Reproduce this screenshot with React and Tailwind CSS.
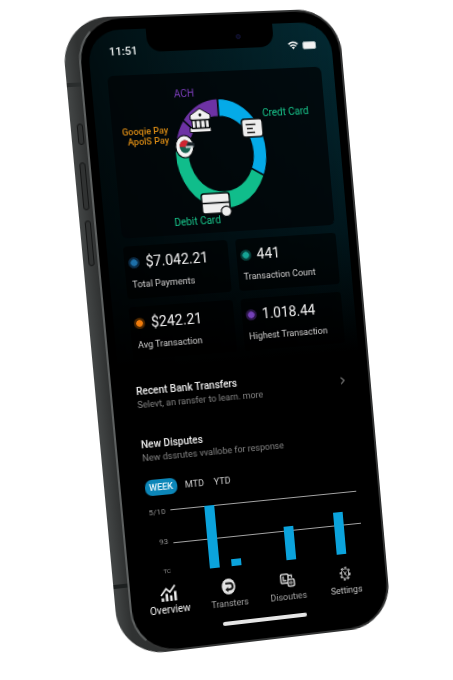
import { useState } from "react";
import { ChevronRight } from "lucide-react";

const segments = [
  { from: 1, to: 116, color: "#04aae8" },
  { from: 116, to: 284, color: "#10bd8b" },
  { from: 284, to: 310, color: "#6d32a4" },
  { from: 310, to: 361, color: "#6d32a4" },
];

const stats = [
  { value: "$7.042.21", label: "Total Payments", dot: "bg-[#1d6fa8] outline-[#0b2b45]" },
  { value: "441", label: "Transaction Count", dot: "bg-[#16a394] outline-[#07403c]" },
  { value: "$242.21", label: "Avg Transaction", dot: "bg-[#f07c0c] outline-[#4a2600]" },
  { value: "1.018.44", label: "Highest Transaction", dot: "bg-[#7440b8] outline-[#2b1748]" },
];

const bars = [
  { x: 34, height: 63 },
  { x: 56, height: 7 },
  { x: 112, height: 34 },
  { x: 164, height: 43 },
];

const periods = ["WEEK", "MTD", "YTD"];

function point(angle, rx, ry) {
  const t = (angle * Math.PI) / 180;
  return `${(106 + rx * Math.sin(t)).toFixed(2)} ${(82 - ry * Math.cos(t)).toFixed(2)}`;
}

function ringPath({ from, to }) {
  const large = to - from > 180 ? 1 : 0;
  return `M${point(from, 46, 55)} A46 55 0 ${large} 1 ${point(to, 46, 55)} L${point(to, 32, 37)} A32 37 0 ${large} 0 ${point(from, 32, 37)}Z`;
}

function PaymentRing() {
  return (
    <svg className="block" width="215" height="160" viewBox="0 0 215 160" aria-hidden="true">
      {segments.map((s) => (
        <path key={s.from} d={ringPath(s)} fill={s.color} stroke="#02080b" strokeWidth="1.5" />
      ))}
      {/* bank */}
      <g stroke="#05080a" strokeWidth="1">
        <path d="M78 47V42.500L88 36 98 42.500V47H96.500V55H98V59.500H77V55H79.500V47Z" fill="#f1f1f1" />
        <path d="M78.500 47.500H97.500M79 55.500H97M83.200 48V55M87.900 48V55M92.600 48V55" strokeWidth="1.400" />
        <circle cx="88" cy="42.500" r="1.400" fill="#05080a" stroke="none" />
      </g>
      {/* card */}
      <rect x="129" y="49" width="21" height="18" rx="3" fill="#ededed" stroke="#05080a" strokeWidth="1.5" />
      <path d="M133 54.500H143M134 58.500H140M134 62.500H142" stroke="#222" strokeWidth="1.300" fill="none" />
      {/* wallet */}
      <ellipse cx="70" cy="73" rx="9" ry="11" fill="#f4f4f4" stroke="#05080a" strokeWidth="1.200" />
      <ellipse cx="70.500" cy="73" rx="5.500" ry="6.500" fill="#17614f" />
      <path d="M65 73A5.500 6.500 0 0 1 74 68L71 73.500Z" fill="#cf2531" />
      <path d="M71 73 74.500 68.500 80 70V74Z" fill="#1c262b" />
      <path d="M71 73.500H78.500" stroke="#c9d2d4" strokeWidth="1.800" />
      {/* debit card */}
      <rect x="82" y="121" width="28" height="20" rx="2.500" fill="#efefef" stroke="#05080a" strokeWidth="1.500" />
      <path d="M82 130.500H110" stroke="#05080a" strokeWidth="1.600" />
      <circle cx="106" cy="139.500" r="5.200" fill="#efefef" stroke="#05080a" strokeWidth="1.200" />
    </svg>
  );
}

function OverviewIcon() {
  return (
    <svg width="18" height="18" viewBox="0 0 18 18" fill="none" stroke="#f2f2f2" aria-hidden="true">
      <path d="M2.500 17V13.500M6.700 17V9.500M11 17V11.500M15.300 17V7.500" strokeWidth="2.400" />
      <path d="M1 11 6.500 4.500 10 8 15.500 1.500" strokeWidth="1.700" />
    </svg>
  );
}

function TransfersIcon() {
  return (
    <svg width="18" height="18" viewBox="0 0 18 18" fill="none" aria-hidden="true">
      <ellipse cx="9" cy="9" rx="6.800" ry="8" fill="#e2e2e2" />
      <path d="M6 5.800H10A3 3 0 0 1 10 12H7" stroke="#181818" strokeWidth="1.900" />
      <path d="M8.500 9.200 5.500 12 8.500 14.500Z" fill="#181818" />
    </svg>
  );
}

function DisputesIcon() {
  return (
    <svg width="18" height="18" viewBox="0 0 18 18" fill="none" stroke="#d2d2d2" aria-hidden="true">
      <rect x="2.500" y="3" width="7.500" height="9" rx="1" strokeWidth="1.500" />
      <path d="M5 5V9.500H8" strokeWidth="1.300" />
      <path d="M10 4.500H13.500V7" strokeWidth="1.300" />
      <rect x="9.500" y="8.500" width="6.500" height="7" rx="1.500" fill="#050505" strokeWidth="1.500" />
      <circle cx="12.700" cy="12" r="1.200" strokeWidth="1" />
    </svg>
  );
}

function SettingsIcon() {
  return (
    <svg width="18" height="18" viewBox="0 0 18 18" fill="none" stroke="#bdbdbd" aria-hidden="true">
      <ellipse cx="9" cy="9" rx="3.700" ry="5" strokeWidth="1.100" />
      <ellipse cx="9" cy="9" rx="4.800" ry="6.300" strokeWidth="1.600" strokeDasharray="2.200 2" />
      <path d="M7.500 6.500 10.500 11.500M10.500 7 8 10" strokeWidth="1" />
    </svg>
  );
}

const tabs = [
  { label: "Overview", Icon: OverviewIcon, style: "text-[10px] text-[#f2f2f2]" },
  { label: "Transters", Icon: TransfersIcon, style: "text-[9px] text-[#a5a5a5]" },
  { label: "Disoutıes", Icon: DisputesIcon, style: "text-[9px] text-[#a5a5a5]" },
  { label: "Settings", Icon: SettingsIcon, style: "text-[9px] text-[#c4c4c4]" },
];

function StatusBar() {
  return (
    <div className="flex h-[45px] items-center justify-between pr-[3px] pl-1">
      <span className="text-[11px] font-medium text-[#eef2f2]">11:51</span>
      <div className="absolute top-0 left-[58px] h-[23px] w-[127px] rounded-b-[14px] bg-black">
        <div className="absolute top-[9px] right-[33px] size-[5px] rounded-full border border-[#14143c] bg-[#090918]" />
      </div>
      <div className="flex items-center gap-1">
        <svg width="11" height="9" viewBox="0 0 11 9" fill="none" stroke="#f2f2f2" aria-hidden="true">
          <path d="M.8 3.300Q5.500-.8 10.200 3.300M2.500 5.300Q5.500 2.700 8.500 5.300" strokeWidth="1.600" />
          <path d="M3.800 6.500Q5.500 5.200 7.200 6.500L5.500 8.500Z" fill="#f2f2f2" stroke="none" />
        </svg>
        <div className="h-[8px] w-[14px] rounded-[2px] border border-[#9fb0b3] bg-[#f2f2f2]" />
      </div>
    </div>
  );
}

function StatTile({ stat }) {
  return (
    <div className="h-[52px] rounded-[4px] bg-black/60 pt-[6px] pl-[6px] whitespace-nowrap">
      <div className="flex items-center gap-2">
        <span className={`size-[7px] shrink-0 rounded-full outline-2 ${stat.dot}`} />
        <span className="text-[14px] leading-5 text-[#f0f0f0]">{stat.value}</span>
      </div>
      <p className="mt-1 text-[9px] leading-4 text-[#cfcfcf]">{stat.label}</p>
    </div>
  );
}

export default function App() {
  const [period, setPeriod] = useState("WEEK");
  const [tab, setTab] = useState("Overview");

  return (
    <main className="min-h-screen overflow-hidden bg-white pt-[18px] font-['Roboto',sans-serif]">
      {/* device, leaning back to the right */}
      <div className="relative ml-[13.5%] w-[61.4%] min-w-[278px] origin-[14px_0] rounded-[46px] bg-linear-to-r from-[#434646] via-[#303232] via-5% to-[#222] pl-[14px] outline-1 outline-transparent [transform:matrix3d(1.0301,-0.0383,0,0.0001294,0.0948,1.0245,0,0.0000194,0,0,1,0,0,0,0,1)]">
        <div className="absolute top-[103px] left-[6px] h-[21px] w-[6px] rounded-full border border-[#151616] bg-[#303232]" />
        <div className="absolute top-[141px] left-[5px] h-[47px] w-[6px] rounded-full border border-[#151616] bg-[#303232]" />
        <div className="absolute top-[198px] left-[5px] h-[45px] w-[6px] rounded-full border border-[#151616] bg-[#303232]" />
        <div className="absolute top-[63px] left-0 h-1 w-[14px] bg-[#2a2d2d]" />
        <div className="absolute top-[558px] left-0 h-1 w-[14px] bg-[#1d2020]" />

        <div className="relative rounded-[44px] border-2 border-[#333434] border-l-[#5d6060] bg-black px-[8px] pt-[11px] pb-[8px]">
          <div className="relative overflow-hidden rounded-[32px] bg-[linear-gradient(to_right,rgba(0,0,0,0.65),transparent),linear-gradient(#032a33,#01161c_35%,#000_55%)] pr-[13px] pb-[9px] pl-4">
            <StatusBar />

            <section className="relative rounded-[6px] bg-[#010508]/80" aria-label="Payment methods">
              <PaymentRing />
              <div className="absolute inset-0 text-[10px] leading-[10px] whitespace-nowrap">
                <span className="absolute top-[16px] left-[64px] text-[#7a3db8]">ACH</span>
                <span className="absolute top-[39px] left-[151px] text-[#18c78c]">Credt Card</span>
                <span className="absolute top-[51px] right-[160px] text-right text-[9px] font-medium text-[#d98a14]">
                  Gooqie Pay
                  <br />
                  ApolS Pay
                </span>
                <span className="absolute top-[143px] left-[53px] text-[#18c78c]">Debit Card</span>
              </div>
            </section>

            <section className="mt-2 grid grid-cols-2 gap-2" aria-label="Totals">
              {stats.map((stat) => (
                <StatTile key={stat.label} stat={stat} />
              ))}
            </section>

            <button className="mt-[25px] flex w-full items-center justify-between text-left">
              <span>
                <span className="block text-[10px] leading-[14px] font-medium text-[#ececec]">Recent Bank Transfers</span>
                <span className="block text-[9px] leading-3 text-[#858585]">Selevt, an ransfer to learn. more</span>
              </span>
              <ChevronRight className="size-3 text-[#a8a8a8]" strokeWidth={2} />
            </button>

            <section className="mt-[27px]">
              <h2 className="text-[10px] leading-[14px] font-medium text-[#ececec]">New Disputes</h2>
              <p className="text-[9px] leading-3 text-[#858585]">New dssrutes vvallobe for response</p>

              <div className="mt-4 flex gap-[6px]">
                {periods.map((name) => (
                  <button
                    key={name}
                    onClick={() => setPeriod(name)}
                    className={`h-4 rounded-[7px] text-[9px] leading-4 ${
                      period === name ? "bg-[#0c86b8] px-1 font-medium text-[#e6f4fa]" : "px-[2px] text-[#cfcfcf]"
                    }`}
                  >
                    {name}
                  </button>
                ))}
              </div>

              <div className="mt-[10px] flex h-[72px] justify-between">
                <div className="flex w-[18px] flex-col justify-between py-[2px] text-right text-[8px] leading-[9px] text-[#8f8f8f]">
                  <span>5/10</span>
                  <span>93</span>
                  <span className="text-[6px]">TC</span>
                </div>
                <svg width="192" height="72" viewBox="0 0 192 72" aria-hidden="true">
                  <path d="M0 5.500H190M0 38.500H192" stroke="#a3a3a3" strokeWidth="1" />
                  {bars.map((bar) => (
                    <rect key={bar.x} x={bar.x} y={68 - bar.height} width="10" height={bar.height} fill="#0ba3dc" />
                  ))}
                </svg>
              </div>
            </section>

            <nav className="mt-[7px] -mr-[9px] -ml-4 grid grid-cols-4">
              {tabs.map(({ label, Icon, style }) => (
                <button
                  key={label}
                  onClick={() => setTab(label)}
                  aria-current={tab === label ? "page" : undefined}
                  className="flex flex-col items-center"
                >
                  <Icon />
                  <span className={`leading-4 ${style}`}>{label}</span>
                </button>
              ))}
            </nav>
            <div className="mx-auto mt-[10px] h-1 w-[86px] rounded-full bg-[#e6e6e6]" />
          </div>
        </div>
      </div>
    </main>
  );
}
